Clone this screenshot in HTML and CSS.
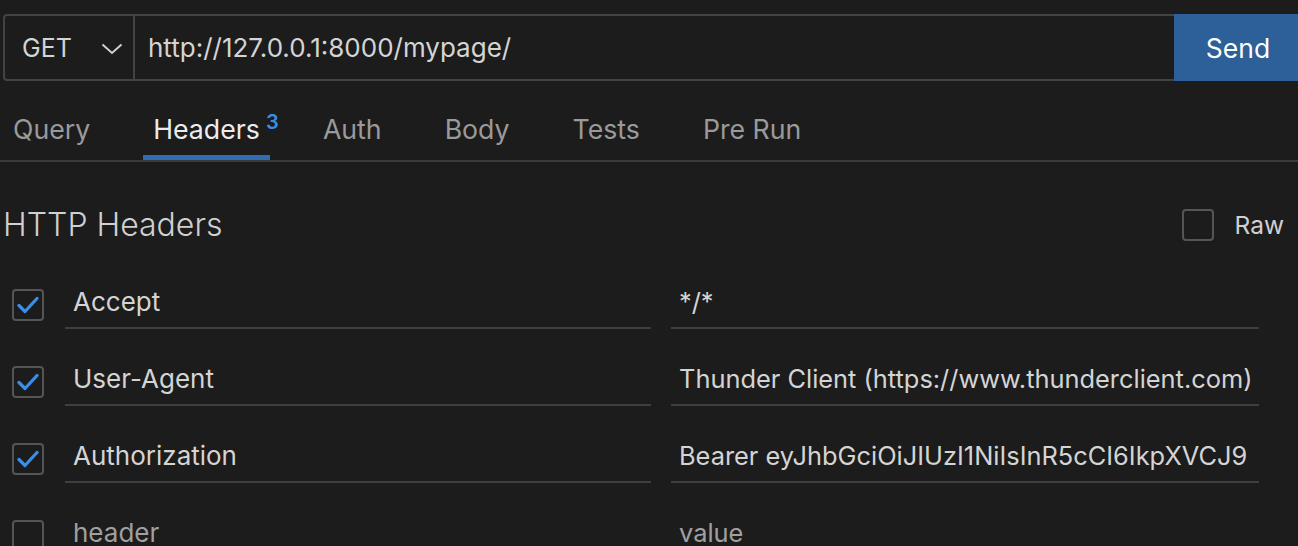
FILE: index.html
```html
<!DOCTYPE html>
<html>
<head>
<meta charset="utf-8">
<link rel="stylesheet" href="styles.css">
</head>
<body>
<div class="bar">
  <div class="method">
    <span class="method-text">GET</span>
    <svg class="chev" width="22" height="12" viewBox="0 0 22 12"><path d="M1.5 1.5 L11 10 L20.5 1.5" fill="none" stroke="#cfcfcf" stroke-width="2"/></svg>
  </div>
  <div class="url">http://127.0.0.1:8000/mypage/</div>
  <div class="send">Send</div>
</div>
<div class="tabs">
  <div class="tab">Query</div>
  <div class="tab active">Headers<sup class="badge">3</sup></div>
  <div class="tab">Auth</div>
  <div class="tab">Body</div>
  <div class="tab">Tests</div>
  <div class="tab">Pre Run</div>
</div>
<div class="section-head">
  <div class="title">HTTP Headers</div>
  <div class="raw"><span class="box"></span><span class="raw-label">Raw</span></div>
</div>
<div class="rows">
  <div class="row">
    <span class="box checked"><svg width="22" height="18" viewBox="0 0 22 18"><path d="M2 9.5 L8 15.5 L20 2.5" fill="none" stroke="#3a8ee6" stroke-width="3.2" stroke-linecap="round" stroke-linejoin="round"/></svg></span>
    <div class="field name">Accept</div>
    <div class="field value">*/*</div>
  </div>
  <div class="row">
    <span class="box checked"><svg width="22" height="18" viewBox="0 0 22 18"><path d="M2 9.5 L8 15.5 L20 2.5" fill="none" stroke="#3a8ee6" stroke-width="3.2" stroke-linecap="round" stroke-linejoin="round"/></svg></span>
    <div class="field name">User-Agent</div>
    <div class="field value">Thunder Client (https://www.thunderclient.com)</div>
  </div>
  <div class="row">
    <span class="box checked"><svg width="22" height="18" viewBox="0 0 22 18"><path d="M2 9.5 L8 15.5 L20 2.5" fill="none" stroke="#3a8ee6" stroke-width="3.2" stroke-linecap="round" stroke-linejoin="round"/></svg></span>
    <div class="field name">Authorization</div>
    <div class="field value">Bearer eyJhbGciOiJIUzI1NiIsInR5cCI6IkpXVCJ9</div>
  </div>
  <div class="row">
    <span class="box"></span>
    <div class="field name placeholder">header</div>
    <div class="field value placeholder">value</div>
  </div>
</div>
</body>
</html>
```

FILE: styles.css
```css
html, body {
  margin: 0;
  padding: 0;
  background: #1c1c1c;
  color: #cccccc;
  font-family: Inter, "Noto Sans", "Liberation Sans", sans-serif;
  overflow: hidden;
  height: 546px;
}

.bar {
  display: flex;
  margin: 14px 0 0 3px;
  height: 67px;
  box-sizing: border-box;
}

.method {
  width: 132px;
  box-sizing: border-box;
  border: 2px solid #434343;
  border-radius: 4px 0 0 4px;
  display: flex;
  align-items: center;
  padding-left: 17px;
  background: #1c1c1c;
}

.method-text {
  font-size: 25px;
  color: #d4d4d4;
  width: 79px;
}

.chev {
  display: block;
  margin-top: 2px;
}

.url {
  flex: 1;
  box-sizing: border-box;
  border-top: 2px solid #434343;
  border-bottom: 2px solid #434343;
  display: flex;
  align-items: center;
  padding-left: 13px;
  font-size: 26px;
  color: #d4d4d4;
}

.send {
  width: 124px;
  background: #2d5f98;
  color: #ffffff;
  font-size: 26.5px;
  display: flex;
  align-items: center;
  justify-content: center;
  padding-left: 4px;
  box-sizing: border-box;
}

.tabs {
  display: flex;
  gap: 43px;
  padding-left: 3px;
  border-bottom: 2px solid #3a3a3a;
  box-sizing: border-box;
  height: 81px;
}

.tab {
  position: relative;
  padding: 0 10px;
  display: flex;
  align-items: center;
  font-size: 26.7px;
  color: #9a9a9a;
  padding-top: 21px;
  box-sizing: border-box;
  border-bottom: 5px solid transparent;
}

.tab.active {
  color: #ececec;
  border-bottom-color: #2f6cb0;
}

.badge {
  position: absolute;
  left: calc(100% - 4px);
  top: 31px;
  font-size: 20px;
  line-height: 20px;
  color: #3a8ee6;
  font-weight: 600;
}

.section-head {
  display: flex;
  align-items: center;
  justify-content: space-between;
  padding: 0 14px 0 3px;
  height: 125px;
}

.title {
  font-size: 32px;
  font-weight: 300;
  color: #d0d0d0;
}

.raw {
  display: flex;
  align-items: center;
  gap: 21px;
}

.raw-label {
  font-size: 24.5px;
  color: #cfcfcf;
}

.box {
  width: 32px;
  height: 32px;
  box-sizing: border-box;
  border: 2px solid #555555;
  border-radius: 4px;
  display: flex;
  align-items: center;
  justify-content: center;
  flex: none;
}

.rows {
  display: flex;
  flex-direction: column;
  padding-left: 12px;
  max-height: 259px;
  overflow: hidden;
}

.row {
  display: flex;
  align-items: flex-start;
  height: 77px;
  flex: none;
}

.row .box {
  margin-top: 2px;
}

.field {
  box-sizing: border-box;
  height: 42px;
  border-bottom: 2px solid #3f3f3f;
  padding-left: 8px;
  font-size: 26px;
  color: #d4d4d4;
  white-space: nowrap;
  overflow: hidden;
  line-height: 30px;
}

.name {
  width: 586px;
  margin-left: 21px;
}

.value {
  width: 588px;
  margin-left: 20px;
  font-size: 25.4px;
}

.placeholder {
  color: #a0a0a0;
}
```
